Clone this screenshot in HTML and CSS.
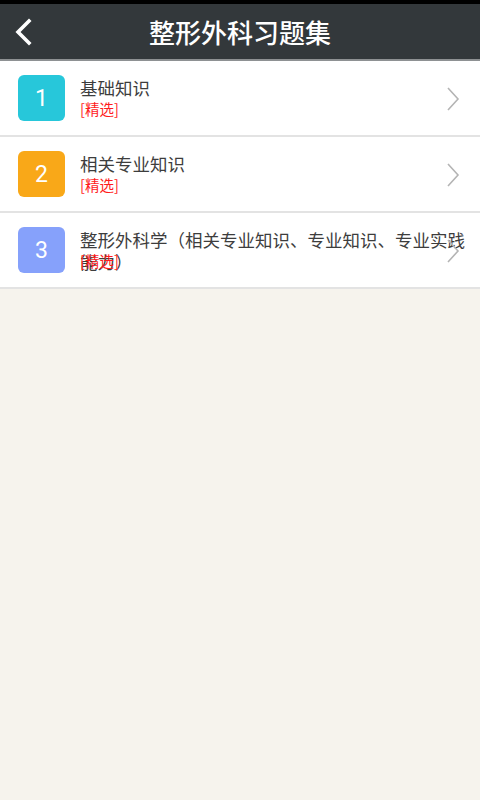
FILE: index.html
```html
<!DOCTYPE html>
<html lang="zh">
<head>
  <meta charset="UTF-8" />
  <meta name="viewport" content="width=device-width, initial-scale=1.0"/>
  <title>整形外科习题集</title>
  <link rel="stylesheet" href="styles.css">
</head>
<body>
  <div class="statusbar"></div>
  <header class="topbar">
    <a class="back" href="#">
      <svg width="20" height="28" viewBox="0 0 20 28">
        <polyline points="15,3 4,14 15,25" fill="none" stroke="#fff" stroke-width="3.6" stroke-linecap="square"/>
      </svg>
    </a>
    <h1>整形外科习题集</h1>
  </header>

  <ul class="list">
    <li class="item">
      <span class="badge cyan">1</span>
      <div class="text">
        <div class="title">基础知识</div>
        <div class="tag">[精选]</div>
      </div>
      <svg class="arrow" width="14" height="24" viewBox="0 0 14 24">
        <polyline points="2,1 12,12 2,23" fill="none" stroke="#b4b4b4" stroke-width="1.6"/>
      </svg>
    </li>
    <li class="item">
      <span class="badge orange">2</span>
      <div class="text">
        <div class="title">相关专业知识</div>
        <div class="tag">[精选]</div>
      </div>
      <svg class="arrow" width="14" height="24" viewBox="0 0 14 24">
        <polyline points="2,1 12,12 2,23" fill="none" stroke="#b4b4b4" stroke-width="1.6"/>
      </svg>
    </li>
    <li class="item">
      <span class="badge blue">3</span>
      <div class="text">
        <div class="title">整形外科学（相关专业知识、专业知识、专业实践能力）</div>
        <div class="tag">[精选]</div>
      </div>
      <svg class="arrow" width="14" height="24" viewBox="0 0 14 24">
        <polyline points="2,1 12,12 2,23" fill="none" stroke="#b4b4b4" stroke-width="1.6"/>
      </svg>
    </li>
  </ul>
</body>
</html>
```

FILE: styles.css
```css
body {
  margin: 0;
  padding: 0;
  background-color: #f6f3ed;
  font-family: "Noto Sans CJK SC", "Noto Sans", sans-serif;
}

.statusbar {
  height: 4px;
  background-color: #000;
}

.topbar {
  height: 55px;
  background-color: #33383b;
  border-bottom: 2px solid #8e9193;
  display: flex;
  align-items: center;
  justify-content: center;
  position: relative;
}

.topbar h1 {
  margin: 0;
  color: #fff;
  font-size: 26px;
  font-weight: 500;
  line-height: 30px;
}

.back {
  position: absolute;
  left: 14px;
  top: 14px;
  display: block;
  height: 28px;
}

.list {
  list-style: none;
  margin: 0;
  padding: 0;
}

.item {
  position: relative;
  display: flex;
  align-items: center;
  height: 74px;
  padding-left: 18px;
  background-color: #fff;
  border-bottom: 2px solid #e3e3e3;
}

.badge {
  width: 47px;
  height: 46px;
  border-radius: 6px;
  color: #fff;
  font-family: Roboto, sans-serif;
  font-size: 23px;
  display: flex;
  align-items: center;
  justify-content: center;
  margin-right: 15px;
  flex-shrink: 0;
}

.cyan { background-color: #27c7da; }
.orange { background-color: #f9a818; }
.blue { background-color: #86a1fb; }

.text {
  align-self: flex-start;
  padding-top: 16px;
  width: 394px;
}

.title {
  height: 22px;
  font-size: 17.5px;
  line-height: 22px;
  color: #3d3d3d;
}

.tag {
  font-size: 14.5px;
  line-height: 19px;
  color: #ff1c1c;
}

.arrow {
  position: absolute;
  right: 20px;
  top: 26px;
}
```
